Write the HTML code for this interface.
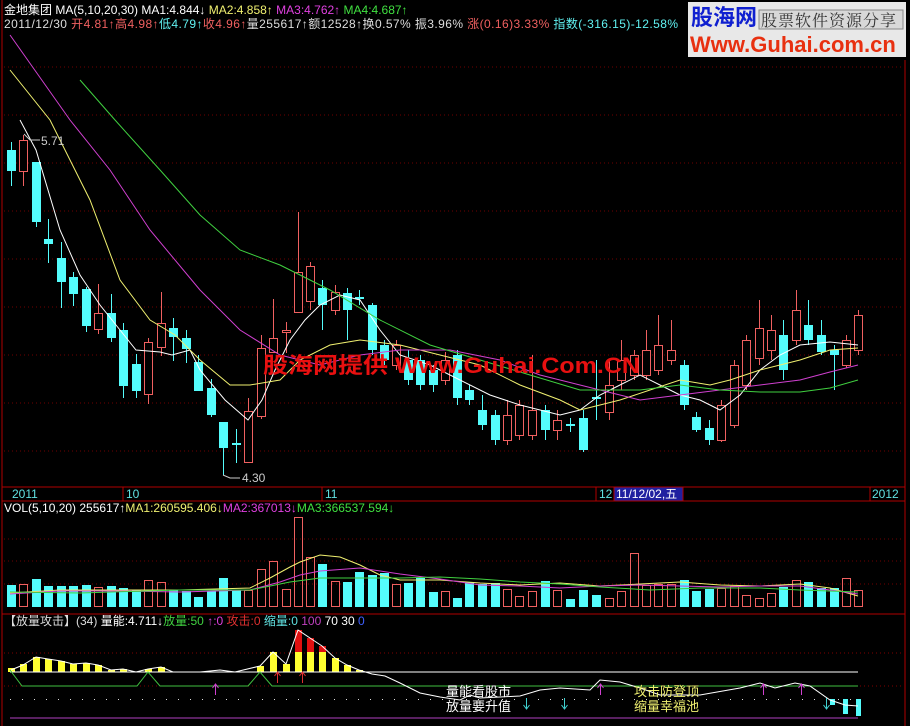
<!DOCTYPE html>
<html><head><meta charset="utf-8"><style>
html,body{margin:0;padding:0;background:#000;width:910px;height:726px;overflow:hidden}
svg{display:block}
text{font-family:"Liberation Sans","Noto Sans CJK SC",sans-serif;font-size:12px}
</style></head><body>
<svg id="s" width="910" height="726" xmlns="http://www.w3.org/2000/svg">
<rect width="910" height="726" fill="#000"/>
<g id="grid"></g>
<g id="cd"></g>
<g id="ma" fill="none" stroke-width="1">
<polyline stroke="#fff" points="20,120 36,150 60,230 80,275 100,305 120,330 136,350 160,352 172,355 190,350 200,370 225,400 248,420 262,400 275,370 290,340 305,320 320,305 340,295 360,300 380,330 400,355 430,365 460,380 490,395 520,405 560,415 580,410 600,395 620,385 640,375 660,385 680,395 700,400 720,410 740,395 760,370 780,355 800,345 830,342 858,345"/>
<polyline stroke="#f0f070" points="10,70 50,120 90,200 120,280 150,320 175,335 200,360 230,385 250,385 280,380 300,360 330,345 360,340 400,345 440,355 480,365 520,385 560,400 580,410 600,405 620,400 650,390 680,380 710,385 730,380 760,370 800,360 830,350 858,348"/>
<polyline stroke="#d040d0" points="10,35 70,120 110,170 150,230 200,290 240,330 280,355 320,365 360,355 400,350 450,350 500,360 540,375 580,385 620,395 640,400 680,395 720,390 760,385 800,380 830,372 858,365"/>
<polyline stroke="#40d040" points="80,80 115,120 160,170 200,215 240,250 280,265 330,290 380,320 430,345 480,360 530,375 580,390 640,390 680,385 720,390 760,392 800,392 830,388 858,380"/>
</g>
<polyline points="24,134 30,140 40,140" fill="none" stroke="#ccc"/>
<text x="41" y="145" fill="#ccc">5.71</text>
<polyline points="223,475 230,478 240,478" fill="none" stroke="#ccc"/>
<text x="242" y="482" fill="#ccc">4.30</text>
<text x="263" y="373" fill="#e81010" textLength="377" lengthAdjust="spacingAndGlyphs" style="font-size:22px;font-weight:bold">股海网提供 Www.Guhai.Com.CN</text>

<!-- logo -->
<rect x="688" y="2" width="218" height="55" fill="#e8e8e8"/>
<text x="691" y="25" fill="#1020d0" style="font-size:22px;font-weight:bold">股海网</text>
<rect x="759" y="10" width="144" height="19" fill="#d8d8d8" stroke="#888"/>
<text x="761" y="26" fill="#333" style="font-size:16px;font-family:'Noto Serif CJK SC',serif;letter-spacing:1px">股票软件资源分享</text>
<text x="690" y="52" fill="#e83010" style="font-size:22px;font-weight:bold">Www.Guhai.com.cn</text>

<!-- header -->
<text x="4" y="14"><tspan fill="#fff">金地集团 MA(5,10,20,30) MA1:4.844↓ </tspan><tspan fill="#f0f070">MA2:4.858↑ </tspan><tspan fill="#e040e0">MA3:4.762↑ </tspan><tspan fill="#40e040">MA4:4.687↑</tspan></text>
<text x="4" y="28" textLength="674" lengthAdjust="spacing"><tspan fill="#ddd">2011/12/30 </tspan><tspan fill="#f06060">开4.81↑高4.98↑</tspan><tspan fill="#60f0f0">低4.79↑</tspan><tspan fill="#f06060">收4.96↑</tspan><tspan fill="#ddd">量255617↑额12528↑换0.57% 振3.96% </tspan><tspan fill="#f06060">涨(0.16)3.33% </tspan><tspan fill="#60f0f0">指数(-316.15)-12.58%</tspan></text>

<!-- axis -->
<g stroke="#b00000" fill="none">
<line x1="2" y1="0" x2="2" y2="726"/>
<line x1="905" y1="60" x2="905" y2="726"/>
<line x1="2" y1="487" x2="905" y2="487"/>
<line x1="2" y1="501" x2="905" y2="501"/>
<line x1="2" y1="614" x2="905" y2="614"/>
<line x1="870" y1="487" x2="870" y2="501"/>
<line x1="123" y1="487" x2="123" y2="501"/>
<line x1="322" y1="487" x2="322" y2="501"/>
<line x1="596" y1="487" x2="596" y2="501"/>
</g>
<text x="12" y="498" fill="#60e0e0">2011</text>
<text x="126" y="498" fill="#60e0e0">10</text>
<text x="325" y="498" fill="#60e0e0">11</text>
<text x="599" y="498" fill="#60e0e0">12</text>
<rect x="614" y="487" width="69" height="14" fill="#2020a0" stroke="#b00000"/>
<text x="616" y="498" fill="#fff">11/12/02,五</text>
<text x="872" y="498" fill="#60e0e0">2012</text>

<text x="4" y="512"><tspan fill="#fff">VOL(5,10,20) 255617↑</tspan><tspan fill="#f0f070">MA1:260595.406↓</tspan><tspan fill="#e040e0">MA2:367013↓</tspan><tspan fill="#40e040">MA3:366537.594↓</tspan></text>
<g id="vol"></g>
<g fill="none">
<polyline stroke="#f0f070" points="10,593 60,590 120,590 180,590 250,588 270,578 290,567 300,562 320,555 340,557 360,565 380,575 400,580 440,580 480,583 520,585 560,583 600,586 640,584 680,582 720,585 760,586 800,584 830,588 858,596"/>
<polyline stroke="#d040d0" points="10,594 60,591 120,591 180,592 250,590 280,582 300,575 320,571 360,568 400,574 440,579 480,585 520,586 560,588 600,586 640,585 680,586 720,587 760,586 800,586 830,590 858,594"/>
<polyline stroke="#40d040" points="10,592 80,593 180,590 250,590 290,582 320,578 400,578 440,577 480,579 520,582 560,584 600,587 650,590 700,588 760,588 800,590 858,592"/>
</g>

<!-- bottom pane -->
<text x="4" y="625"><tspan fill="#ddd">【放量攻击】(34) </tspan><tspan fill="#fff">量能:4.711↓</tspan><tspan fill="#40d040">放量:50 </tspan><tspan fill="#e040e0">↑:0 </tspan><tspan fill="#e03030">攻击:0 </tspan><tspan fill="#60e0e0">缩量:0 </tspan><tspan fill="#c040c0">100 </tspan><tspan fill="#fff">70 30 </tspan><tspan fill="#4060ff">0</tspan></text>
<g id="bot"></g>
<line x1="10" y1="672" x2="858" y2="672" stroke="#fff"/>
<polyline fill="none" stroke="#40c040" points="10,670 22,686 137,686 148,672 160,686 248,686 260,672 272,686 858,686"/>
<line x1="10" y1="718" x2="858" y2="718" stroke="#b040c0"/>
<polyline fill="none" stroke="#fff" points="11,670 23,665 36,657 48,659 61,661 73,664 86,663 98,665 111,670 123,669 136,672 148,669 161,667 173,672 200,672 220,670 235,672 260,666 273,652 286,664 298,630 310,638 322,646 335,658 347,665 359,670 372,674 385,676 400,683 420,693 440,697 460,700 470,695 480,698 500,697 520,696 540,690 560,688 590,690 600,680 620,682 640,688 660,695 700,695 740,688 760,683 775,688 795,683 810,686 830,700 845,705 858,706"/>
<text x="446" y="696" fill="#fff" style="font-size:13px">量能看股市</text>
<text x="446" y="711" fill="#fff" style="font-size:13px">放量要升值</text>
<text x="634" y="696" fill="#f0f070" style="font-size:13px">攻击防登顶</text>
<text x="634" y="711" fill="#f0f070" style="font-size:13px">缩量幸福池</text>
<g id="arr"></g>
</svg>
<script>
var NS="http://www.w3.org/2000/svg";
function el(p,t,a){var e=document.createElementNS(NS,t);for(var k in a)e.setAttribute(k,a[k]);document.getElementById(p).appendChild(e);return e;}
var CY="#54fcfc",RD="#f06060";
[67,115,163,211,259,307,355,403,451].forEach(function(y){el("grid","line",{x1:4,y1:y,x2:903,y2:y,stroke:"#700000","stroke-dasharray":"1 3"});});
[539,561,584].forEach(function(y){el("grid","line",{x1:4,y1:y,x2:903,y2:y,stroke:"#700000","stroke-dasharray":"1 3"});});
[653,686].forEach(function(y){el("grid","line",{x1:4,y1:y,x2:903,y2:y,stroke:"#800000","stroke-dasharray":"1 3"});});
for(var x=10;x<858;x+=12)el("grid","rect",{x:x,y:699,width:1,height:1,fill:"#ddd"});
var C=[[11,"c",150,171,142,186],[23,"r",140,171,135,186],[36,"c",162,222,162,227],[48,"c",239,244,219,263],[61,"c",258,282,242,308],[73,"c",277,294,272,306],[86,"c",289,326,287,332],[98,"r",313,329,284,334],[111,"c",313,338,294,342],[123,"c",330,386,323,398],[136,"c",364,391,354,398],[148,"r",342,394,338,404],[161,"r",323,347,292,356],[173,"c",328,337,318,361],[186,"c",338,349,330,363],[198,"c",362,391,355,391],[211,"c",388,415,379,417],[223,"c",422,448,422,475],[236,"c",443,445,429,463],[248,"r",411,462,398,462],[261,"r",348,416,335,419],[273,"r",338,352,299,352],[286,"r",330,332,322,353],[298,"r",272,312,212,312],[310,"r",266,301,262,310],[322,"c",288,305,280,330],[335,"r",292,310,285,315],[347,"c",293,310,288,340],[359,"c",297,299,290,305],[372,"c",305,350,303,355],[384,"c",345,360,340,365],[396,"r",345,365,340,370],[408,"c",360,380,350,385],[420,"c",360,385,355,390],[433,"c",370,385,365,392],[445,"r",360,380,352,385],[457,"c",355,398,350,405],[469,"c",390,400,385,405],[482,"c",410,425,395,430],[495,"c",415,440,410,445],[507,"r",415,440,400,445],[519,"r",405,435,400,440],[532,"r",410,435,355,440],[545,"c",410,430,405,440],[557,"r",420,430,410,440],[570,"c",424,426,418,432],[583,"c",418,450,410,452],[596,"c",397,399,360,420],[609,"r",385,412,360,420],[621,"r",360,380,340,390],[634,"r",355,375,350,380],[646,"r",350,375,330,380],[658,"r",345,370,315,375],[671,"r",350,360,320,365],[684,"c",365,405,360,410],[696,"c",417,430,412,432],[709,"c",428,440,420,445],[721,"r",405,440,400,442],[734,"r",365,425,360,428],[746,"r",340,385,335,390],[759,"r",328,358,300,365],[771,"r",330,350,315,360],[783,"c",335,370,320,380],[796,"r",310,340,290,345],[808,"c",325,340,300,345],[821,"c",335,352,320,355],[834,"c",350,355,345,390],[846,"r",340,365,335,368],[858,"r",315,350,310,355]];
C.forEach(function(c){var col=c[1]=="c"?CY:RD;
el("cd","line",{x1:c[0]+.5,y1:c[4],x2:c[0]+.5,y2:c[5],stroke:col});
if(c[1]=="c")el("cd","rect",{x:c[0]-4,y:c[2],width:9,height:Math.max(1,c[3]-c[2]),fill:CY});
else el("cd","rect",{x:c[0]-3.5,y:c[2]+.5,width:8,height:Math.max(1,c[3]-c[2]),fill:"#000",stroke:RD});
});
var V=[585,584,579,586,586,586,585,587,586,588,590,580,582,590,591,597,591,578,590,590,569,561,589,517,557,564,581,582,572,575,573,584,583,578,592,591,598,582,584,583,589,596,591,581,590,599,590,595,598,591,553,585,584,584,580,591,589,588,586,595,598,593,587,580,582,588,588,578,590,596];
C.forEach(function(c,i){var t=V[i]||590;var up=c[1]=="r";
if(up)el("vol","rect",{x:c[0]-3.5,y:t+.5,width:8,height:606-t,fill:"none",stroke:RD});
else el("vol","rect",{x:c[0]-4,y:t,width:9,height:607-t,fill:CY});});
var B=[[11,668],[23,664],[36,657],[48,659],[61,661],[73,664],[86,663],[98,665],[111,670],[123,669],[148,669],[161,667],[260,666],[273,652],[286,664],[298,652],[310,652],[322,652],[335,658],[347,665],[359,670]];
B.forEach(function(b){el("bot","rect",{x:b[0]-3,y:b[1],width:7,height:672-b[1],fill:"#ffff30"});});
[[298,630],[310,638],[322,646]].forEach(function(b){el("bot","rect",{x:b[0]-3,y:b[1],width:7,height:652-b[1],fill:"#e01010"});});
[[832,699,705],[845,699,714],[858,699,716]].forEach(function(b){el("bot","rect",{x:b[0]-2,y:b[1],width:5,height:b[2]-b[1],fill:CY});});
// arrows: [x, topY, up?, color]
function arrow(x,y,up,col){var h=11;
el("arr","line",{x1:x+.5,y1:y,x2:x+.5,y2:y+h,stroke:col});
if(up)el("arr","path",{d:"M"+(x-2.5)+","+(y+4)+" L"+(x+.5)+","+y+" L"+(x+3.5)+","+(y+4),fill:"none",stroke:col});
else el("arr","path",{d:"M"+(x-2.5)+","+(y+h-4)+" L"+(x+.5)+","+(y+h)+" L"+(x+3.5)+","+(y+h-4),fill:"none",stroke:col});}
arrow(215,684,true,"#d040d0");
arrow(277,672,true,"#e03030");
arrow(302,672,true,"#e03030");
arrow(526,698,false,"#40d0d0");
arrow(564,698,false,"#40d0d0");
arrow(600,684,true,"#d040d0");
arrow(763,684,true,"#d040d0");
arrow(801,684,true,"#d040d0");
arrow(826,698,false,"#40d0d0");
</script>
</body></html>
